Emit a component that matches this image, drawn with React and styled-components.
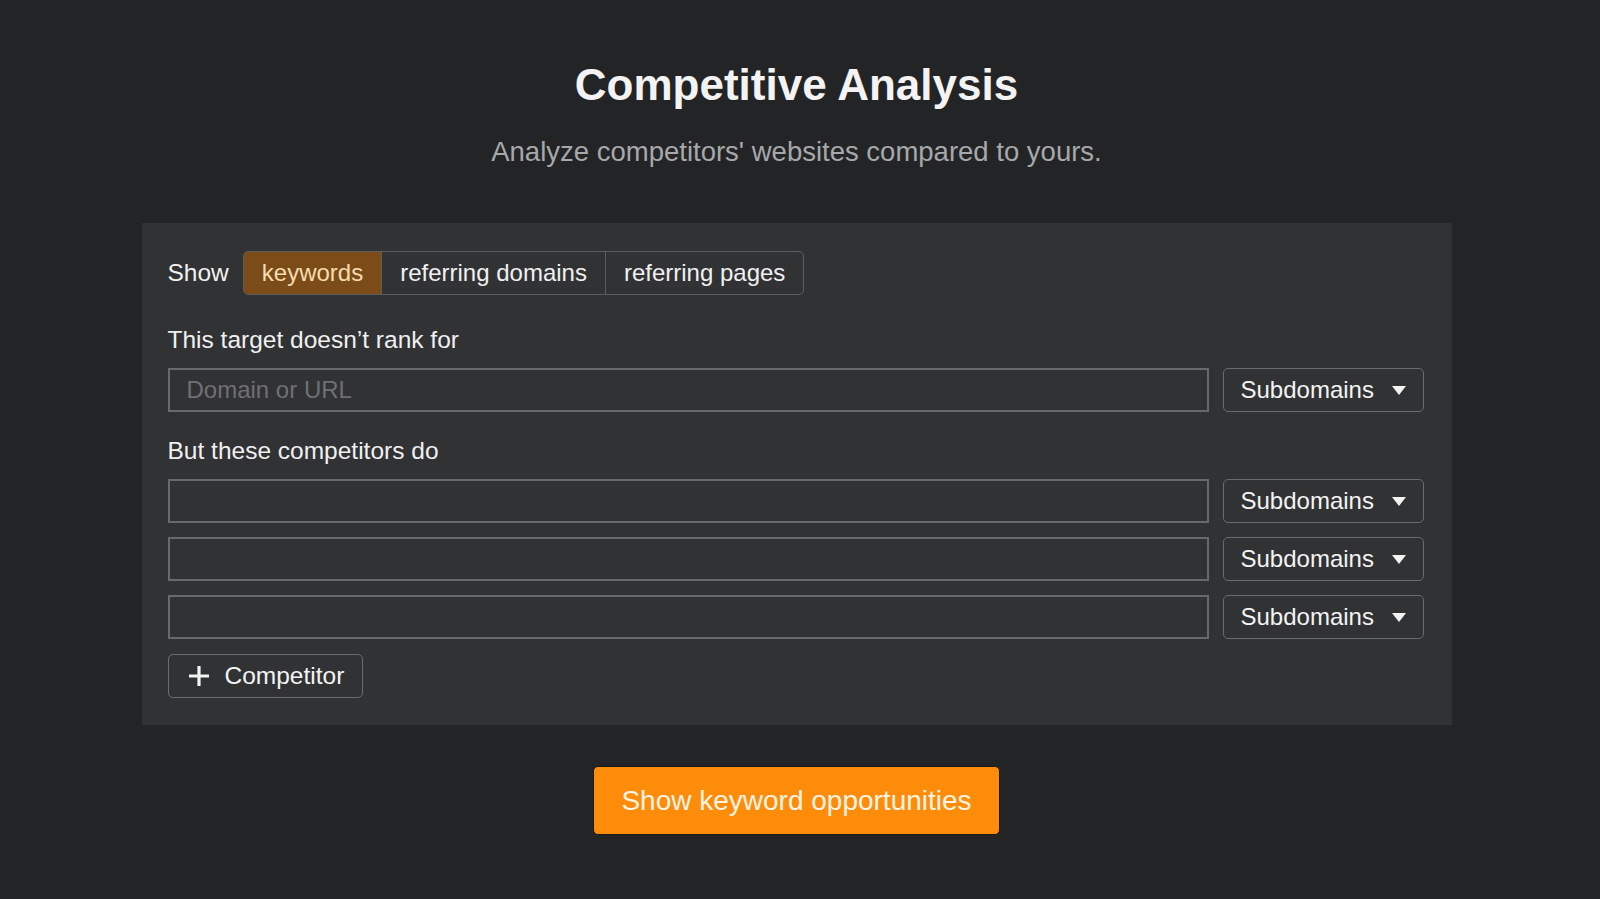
import styled, { createGlobalStyle } from "styled-components";

const GlobalStyle = createGlobalStyle`
	html, body {
		margin: 0;
		padding: 0;
		background: #232426;
	}
	body {
		font-family: "Liberation Sans", Arial, sans-serif;
		color: #f0f0f0;
	}
	* {
		box-sizing: border-box;
	}
`;

const Page = styled.div`
	width: 1593px;
	min-height: 899px;
	padding-top: 59px;
	display: flex;
	flex-direction: column;
	align-items: center;
`;

const Title = styled.h1`
	margin: 0;
	font-size: 44px;
	line-height: 52px;
	font-weight: 700;
	color: #f3f3f3;
`;

const Subtitle = styled.p`
	margin: 25px 0 0;
	font-size: 27.5px;
	line-height: 32px;
	color: #a7a8aa;
`;

const Panel = styled.div`
	width: 1310px;
	margin-top: 55px;
	padding: 28px 28px 27px 26px;
	background: #313234;
	display: flex;
	flex-direction: column;
`;

const ShowRow = styled.div`
	display: flex;
	align-items: center;
	gap: 14px;
`;

const ShowLabel = styled.span`
	font-size: 24.5px;
	color: #f0f0f0;
`;

const Tabs = styled.div`
	display: flex;
	height: 44px;
	border: 1.5px solid #5c5d60;
	border-radius: 5px;
	overflow: hidden;
`;

const Tab = styled.button`
	border: none;
	border-left: ${(p) => (p.first ? "none" : "1.5px solid #5c5d60")};
	background: ${(p) => (p.active ? "#7b4c18" : "transparent")};
	color: ${(p) => (p.active ? "#f6dcae" : "#f0f0f0")};
	font-family: inherit;
	font-size: 24px;
	padding: 0 18px;
	cursor: pointer;
`;

const FieldLabel = styled.div`
	margin-top: ${(p) => p.top}px;
	margin-bottom: 14px;
	font-size: 24.5px;
	line-height: 28px;
	color: #f0f0f0;
`;

const Rows = styled.div`
	display: flex;
	flex-direction: column;
	gap: 14px;
`;

const Row = styled.div`
	display: flex;
	gap: 14px;
`;

const Input = styled.input`
	flex: 1;
	height: 44px;
	border: 2px solid #68696b;
	background: #313234;
	color: #f0f0f0;
	font-family: inherit;
	font-size: 24px;
	padding: 0 17px;
	outline: none;

	&::placeholder {
		color: #6f7072;
	}
`;

const Select = styled.button`
	width: 201px;
	height: 44px;
	border: 1.5px solid #6a6b6d;
	border-radius: 5px;
	background: #313234;
	color: #f3f3f3;
	font-family: inherit;
	font-size: 24px;
	padding: 0 17px 0 17px;
	display: flex;
	align-items: center;
	justify-content: space-between;
	cursor: pointer;
`;

const Caret = styled.span`
	width: 0;
	height: 0;
	border-left: 7px solid transparent;
	border-right: 7px solid transparent;
	border-top: 9px solid #f3f3f3;
`;

const AddButton = styled.button`
	align-self: flex-start;
	margin-top: 15px;
	height: 44px;
	width: 195px;
	border: 1.5px solid #6a6b6d;
	border-radius: 5px;
	background: #313234;
	color: #f3f3f3;
	font-family: inherit;
	font-size: 24.5px;
	padding: 0 0 0 19px;
	display: flex;
	align-items: center;
	gap: 15px;
	cursor: pointer;
`;

const SubmitButton = styled.button`
	margin-top: 41px;
	width: 407px;
	height: 69px;
	border: 1px solid #1a1a1a;
	border-radius: 5px;
	background: #fd8c0a;
	color: #fdf4e4;
	font-family: inherit;
	font-size: 28px;
	cursor: pointer;
`;

const PlusIcon = () => (
	<svg width="22" height="22" viewBox="0 0 22 22">
		<path d="M11 1v20M1 11h20" stroke="#f3f3f3" strokeWidth="3.2" />
	</svg>
);

const SubdomainSelect = () => (
	<Select>
		Subdomains
		<Caret />
	</Select>
);

const App = () => {
	return (
		<>
			<GlobalStyle />
			<Page>
				<Title>Competitive Analysis</Title>
				<Subtitle>Analyze competitors' websites compared to yours.</Subtitle>

				<Panel>
					<ShowRow>
						<ShowLabel>Show</ShowLabel>
						<Tabs>
							<Tab first active>
								keywords
							</Tab>
							<Tab>referring domains</Tab>
							<Tab>referring pages</Tab>
						</Tabs>
					</ShowRow>

					<FieldLabel top={31}>This target doesn’t rank for</FieldLabel>
					<Row>
						<Input placeholder="Domain or URL" />
						<SubdomainSelect />
					</Row>

					<FieldLabel top={25}>But these competitors do</FieldLabel>
					<Rows>
						<Row>
							<Input />
							<SubdomainSelect />
						</Row>
						<Row>
							<Input />
							<SubdomainSelect />
						</Row>
						<Row>
							<Input />
							<SubdomainSelect />
						</Row>
					</Rows>

					<AddButton>
						<PlusIcon />
						Competitor
					</AddButton>
				</Panel>

				<SubmitButton>Show keyword opportunities</SubmitButton>
			</Page>
		</>
	);
};

export default App;
